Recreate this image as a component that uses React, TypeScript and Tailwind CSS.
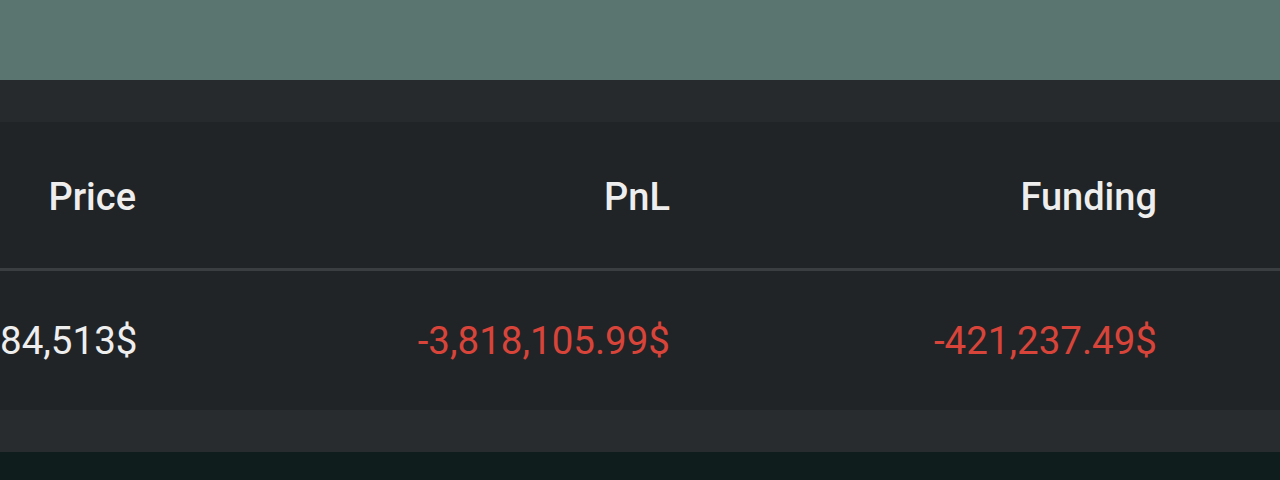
const rows = [{ price: "84,513$", pnl: "-3,818,105.99$", funding: "-421,237.49$" }];

export default function App() {
  return (
    <div className="flex h-[480px] w-[1280px] flex-col overflow-hidden bg-[#0f1e1d] font-['Roboto',sans-serif]">
      {/* top banner */}
      <div className="h-[80px] shrink-0 bg-[#5a7570]" />
      <div className="h-[42px] shrink-0 bg-[#262a2c]" />

      {/* table */}
      <div className="shrink-0 bg-[#212426]">
        <div className="grid h-[146px] grid-cols-[136px_534px_487px] items-center text-right text-[38px] font-medium text-[#eeeeee]">
          <span className="pt-1">Price</span>
          <span className="pt-1">PnL</span>
          <span className="pt-1">Funding</span>
        </div>
        <div className="h-[3px] bg-[#3a3e40]" />
        {rows.map((r) => (
          <div
            key={r.pnl}
            className="grid h-[139px] grid-cols-[136px_534px_487px] items-center text-right text-[38.5px] text-[#eeeeee]"
          >
            <span className="overflow-hidden whitespace-nowrap">{r.price}</span>
            <span className="text-[#d9443a]">{r.pnl}</span>
            <span className="text-[#d9443a]">{r.funding}</span>
          </div>
        ))}
      </div>

      <div className="h-[42px] shrink-0 bg-[#292c2e]" />
    </div>
  );
}
